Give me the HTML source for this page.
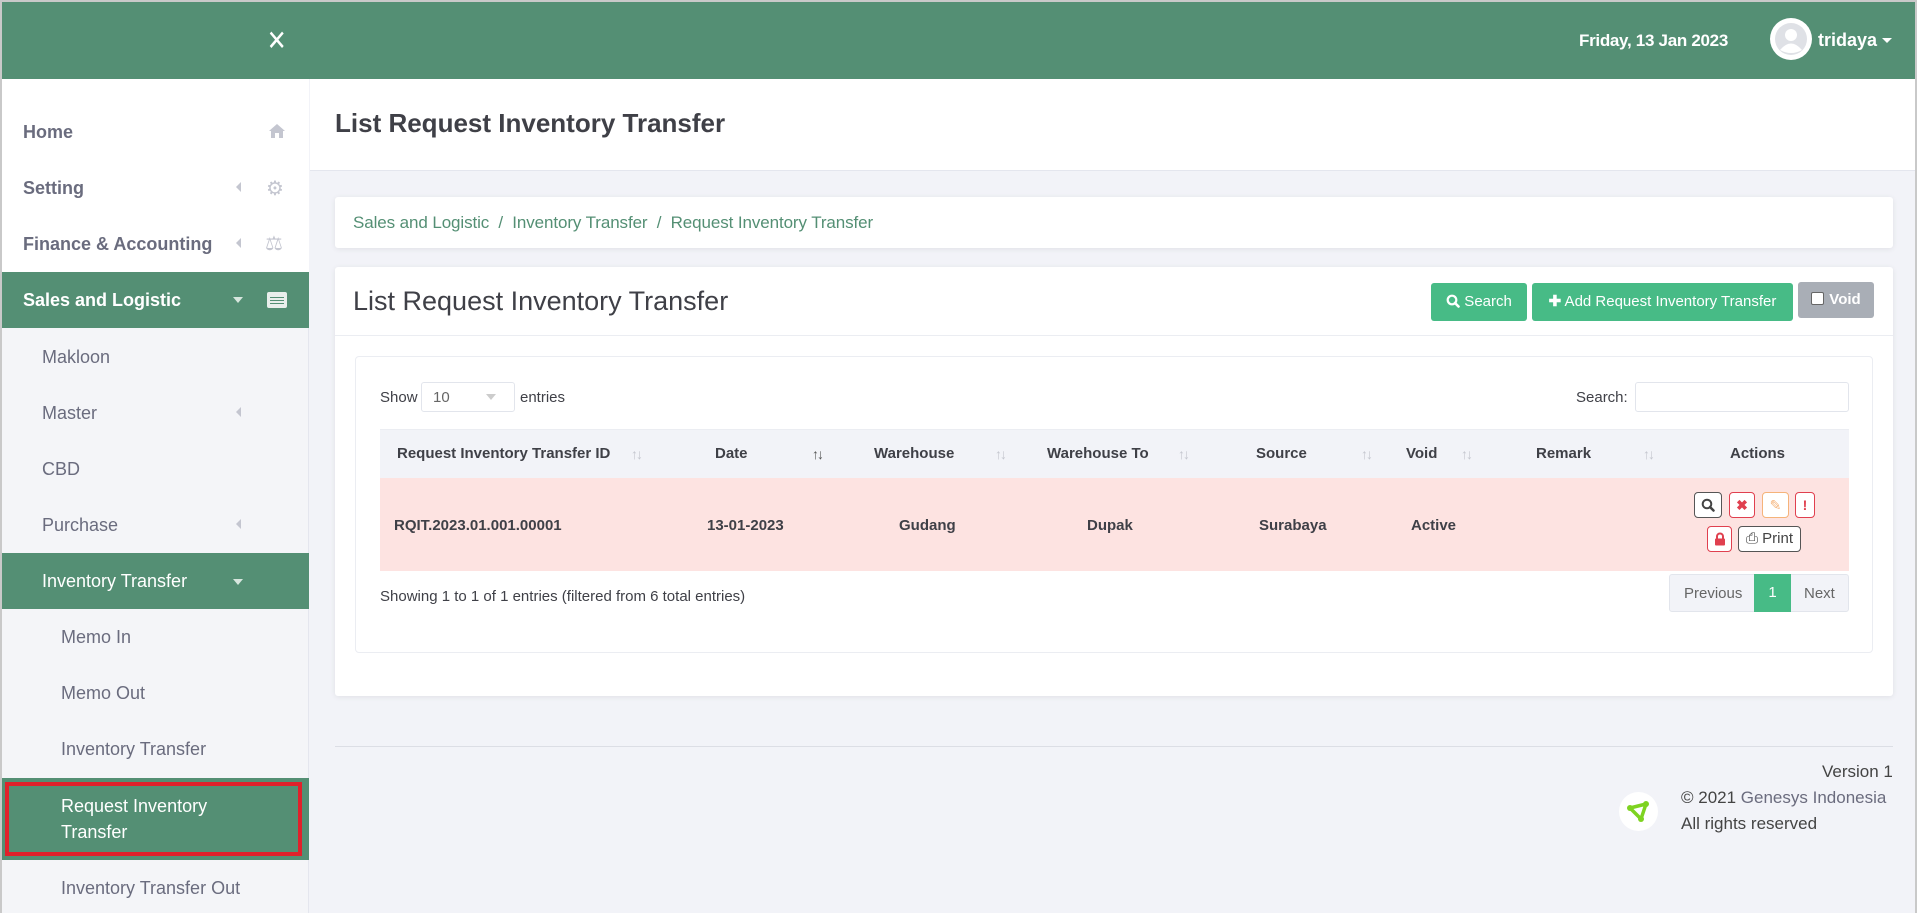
<!DOCTYPE html>
<html><head><meta charset="utf-8"><style>
*{box-sizing:border-box;margin:0;padding:0}
body{width:1917px;height:913px;overflow:hidden;font-family:"Liberation Sans",Arial,sans-serif;background:#f2f3f8;position:relative;color:#3f4047}
.frame{position:absolute;left:0;top:0;width:1917px;height:913px;border:2px solid #c9c9c9;border-bottom:none;pointer-events:none;z-index:10}
.a{position:absolute;white-space:nowrap}
.hdr{position:absolute;left:0;top:0;width:1917px;height:79px;background:#548f74}
.side{position:absolute;left:0;top:79px;width:309px;height:834px;background:#f4f5f8;border-right:1px solid #e4e6ee}
.sw{position:absolute;left:0;top:0;width:309px;height:193px;background:#fff}
.si{position:absolute;left:23px;font-size:18px;font-weight:bold;color:#6a6c7e}
.sub{position:absolute;font-size:18px;color:#6a6c7e}
.band{position:absolute;left:0;width:309px;background:#548f74}
.car{position:absolute;width:0;height:0;border-top:5px solid transparent;border-bottom:5px solid transparent;border-right:5px solid #c4c6d0}
.card{position:absolute;background:#fff;box-shadow:0 1px 6px rgba(0,0,0,.08);border-radius:3px}
.btn{position:absolute;border-radius:3px;color:#fff;font-size:15px;text-align:center}
.th{position:absolute;top:445px;font-size:15px;font-weight:bold;color:#3f4047}
.td{position:absolute;top:517px;font-size:15px;font-weight:bold;color:#3f4047}
.ar{position:absolute;top:446px;font-size:14px;color:#c5c7cf;letter-spacing:-2px}
.ib{position:absolute;height:26px;border:1px solid;border-radius:4px;background:#fff;font-size:14px;text-align:center;line-height:24px}
</style></head><body>
<div class="hdr"></div>
<div class="a" style="left:265px;top:24px;color:#fff;font-size:28px;font-weight:300;transform:scaleX(0.85)">✕</div>
<div class="a" style="left:1579px;top:31px;color:#fff;font-size:17px;font-weight:bold;letter-spacing:-0.3px">Friday, 13 Jan 2023</div>
<div class="a" style="left:1770px;top:18px;width:42px;height:42px;border-radius:50%;background:#fff"></div>
<svg class="a" style="left:1774px;top:22px" width="34" height="34" viewBox="0 0 34 34"><circle cx="17" cy="17" r="16" fill="#dfe1e6"/><circle cx="17" cy="13" r="6" fill="#fff"/><path d="M6 28 Q17 15 28 28 Q17 34 6 28Z" fill="#fff"/></svg>
<div class="a" style="left:1818px;top:30px;color:#fff;font-size:18px;font-weight:bold">tridaya</div>
<div class="a" style="left:1882px;top:38px;border-left:5px solid transparent;border-right:5px solid transparent;border-top:5px solid #fff"></div>

<div class="side">
<div class="sw"></div>
<div class="si" style="top:43px">Home</div>
<svg class="a" style="left:268px;top:44px" width="18" height="16" viewBox="0 0 18 16"><path d="M9 1 L1 8 H3 V15 H7 V10 H11 V15 H15 V8 H17 Z" fill="#c4c6d0"/></svg>
<div class="si" style="top:99px">Setting</div><div class="car" style="left:236px;top:103px"></div>
<div class="a" style="left:266px;top:97px;color:#c4c6d0;font-size:20px">⚙</div>
<div class="si" style="top:155px">Finance &amp; Accounting</div><div class="car" style="left:236px;top:159px"></div>
<div class="a" style="left:265px;top:152px;color:#c4c6d0;font-size:20px">⚖</div>
<div class="band" style="top:193px;height:56px"></div>
<div class="si" style="top:211px;color:#fff">Sales and Logistic</div>
<div class="a" style="left:233px;top:218px;border-left:5px solid transparent;border-right:5px solid transparent;border-top:6px solid #d7e6de"></div>
<div class="a" style="left:267px;top:213px;width:20px;height:16px;background:#e9efec;border-radius:2px"></div>
<div class="a" style="left:270px;top:218px;width:14px;height:1px;background:#548f74;box-shadow:0 3px 0 #548f74,0 6px 0 #548f74"></div>
<div class="sub" style="left:42px;top:268px">Makloon</div>
<div class="sub" style="left:42px;top:324px">Master</div><div class="car" style="left:236px;top:328px"></div>
<div class="sub" style="left:42px;top:380px">CBD</div>
<div class="sub" style="left:42px;top:436px">Purchase</div><div class="car" style="left:236px;top:440px"></div>
<div class="band" style="top:474px;height:56px"></div>
<div class="sub" style="left:42px;top:492px;color:#fff">Inventory Transfer</div>
<div class="a" style="left:233px;top:500px;border-left:5px solid transparent;border-right:5px solid transparent;border-top:6px solid #d7e6de"></div>
<div class="sub" style="left:61px;top:548px">Memo In</div>
<div class="sub" style="left:61px;top:604px">Memo Out</div>
<div class="sub" style="left:61px;top:660px">Inventory Transfer</div>
<div class="band" style="top:699px;height:82px"></div>
<div class="a" style="left:5px;top:703px;width:297px;height:74px;border:4px solid #e0212b"></div>
<div class="sub" style="left:61px;top:714px;color:#fff;line-height:26px;white-space:normal;width:200px">Request Inventory Transfer</div>
<div class="sub" style="left:61px;top:799px">Inventory Transfer Out</div>
</div>

<div class="a" style="left:310px;top:79px;width:1607px;height:92px;background:#fff;border-bottom:1px solid #e4e6ee"></div>
<div class="a" style="left:335px;top:108px;font-size:26px;font-weight:bold;color:#3f4047">List Request Inventory Transfer</div>

<div class="card" style="left:335px;top:197px;width:1558px;height:51px"></div>
<div class="a" style="left:353px;top:213px;font-size:17px;color:#548f74;letter-spacing:-0.1px">Sales and Logistic &nbsp;/&nbsp; Inventory Transfer &nbsp;/&nbsp; Request Inventory Transfer</div>

<div class="card" style="left:335px;top:267px;width:1558px;height:429px"></div>
<div class="a" style="left:335px;top:335px;width:1558px;height:1px;background:#ebedf2"></div>
<div class="a" style="left:353px;top:286px;font-size:27px;font-weight:300;color:#3f4047">List Request Inventory Transfer</div>
<div class="btn" style="left:1431px;top:283px;width:96px;height:38px;background:#47bb86;line-height:38px"><svg width="14" height="14" viewBox="0 0 14 14" style="vertical-align:-2px"><circle cx="6" cy="6" r="4.3" fill="none" stroke="#fff" stroke-width="2.2"/><path d="M9 9 L12.5 12.5" stroke="#fff" stroke-width="2.6" stroke-linecap="round"/></svg> Search</div>
<div class="btn" style="left:1532px;top:283px;width:261px;height:38px;background:#47bb86;line-height:38px"><b>✚</b> Add Request Inventory Transfer</div>
<div class="btn" style="left:1798px;top:282px;width:76px;height:36px;background:#a9aeb6;line-height:36px;font-weight:bold"><span style="display:inline-block;width:13px;height:13px;background:#fff;border:1px solid #666;border-radius:2px;vertical-align:-1px;margin-right:5px"></span>Void</div>

<div class="a" style="left:355px;top:356px;width:1518px;height:297px;background:#fff;border:1px solid #ebedf2;border-radius:4px"></div>
<div class="a" style="left:380px;top:389px;font-size:15px">Show</div>
<div class="a" style="left:421px;top:382px;width:94px;height:30px;border:1px solid #e2e5ec;border-radius:3px"></div>
<div class="a" style="left:433px;top:389px;font-size:15px;color:#666">10</div>
<div class="a" style="left:486px;top:394px;border-left:5px solid transparent;border-right:5px solid transparent;border-top:6px solid #ccc"></div>
<div class="a" style="left:520px;top:389px;font-size:15px">entries</div>
<div class="a" style="left:1576px;top:389px;font-size:15px">Search:</div>
<div class="a" style="left:1635px;top:382px;width:214px;height:30px;border:1px solid #e2e5ec;border-radius:3px"></div>

<div class="a" style="left:380px;top:429px;width:1469px;height:49px;background:#f2f3f8;border-top:1px solid #ebedf2"></div>
<div class="a" style="left:380px;top:478px;width:1469px;height:93px;background:#fde3e1"></div>
<div class="th" style="left:397px">Request Inventory Transfer ID</div><div class="ar" style="left:631px">↑↓</div>
<div class="th" style="left:715px">Date</div><div class="ar" style="left:812px;color:#555">↑↓</div>
<div class="th" style="left:874px">Warehouse</div><div class="ar" style="left:995px">↑↓</div>
<div class="th" style="left:1047px">Warehouse To</div><div class="ar" style="left:1178px">↑↓</div>
<div class="th" style="left:1256px">Source</div><div class="ar" style="left:1361px">↑↓</div>
<div class="th" style="left:1406px">Void</div><div class="ar" style="left:1461px">↑↓</div>
<div class="th" style="left:1536px">Remark</div><div class="ar" style="left:1643px">↑↓</div>
<div class="th" style="left:1730px">Actions</div>
<div class="td" style="left:394px">RQIT.2023.01.001.00001</div>
<div class="td" style="left:707px">13-01-2023</div>
<div class="td" style="left:899px">Gudang</div>
<div class="td" style="left:1087px">Dupak</div>
<div class="td" style="left:1259px">Surabaya</div>
<div class="td" style="left:1411px">Active</div>
<div class="ib" style="left:1694px;top:492px;width:28px;border-color:#555"><svg width="14" height="14" viewBox="0 0 14 14" style="vertical-align:-2px"><circle cx="6" cy="6" r="4.3" fill="none" stroke="#444" stroke-width="2"/><path d="M9 9 L12.5 12.5" stroke="#444" stroke-width="2.5" stroke-linecap="round"/></svg></div>
<div class="ib" style="left:1729px;top:492px;width:26px;border-color:#e0404f;color:#e0404f;font-weight:bold">✖</div>
<div class="ib" style="left:1762px;top:492px;width:27px;border-color:#f5b37a;color:#f5b37a">✎</div>
<div class="ib" style="left:1795px;top:492px;width:20px;border-color:#e0404f;color:#e0404f;font-weight:bold">!</div>
<div class="ib" style="left:1707px;top:526px;width:25px;border-color:#e0404f"><svg width="12" height="14" viewBox="0 0 12 14" style="vertical-align:-2px"><path d="M3 7 V4.5 A3 3 0 0 1 9 4.5 V7" fill="none" stroke="#e0404f" stroke-width="2"/><rect x="1" y="6.5" width="10" height="7" rx="1" fill="#e0404f"/></svg></div>
<div class="ib" style="left:1738px;top:526px;width:63px;border-color:#555;color:#444;font-size:15px">⎙ Print</div>

<div class="a" style="left:380px;top:588px;font-size:15px">Showing 1 to 1 of 1 entries (filtered from 6 total entries)</div>
<div class="a" style="left:1669px;top:574px;width:180px;height:38px;border:1px solid #e2e5ec;border-radius:3px;background:#f2f3f8"></div>
<div class="a" style="left:1684px;top:585px;font-size:15px;color:#666">Previous</div>
<div class="a" style="left:1754px;top:574px;width:37px;height:38px;background:#47bb86;color:#fff;font-size:15px;text-align:center;line-height:38px">1</div>
<div class="a" style="left:1804px;top:585px;font-size:15px;color:#666">Next</div>

<div class="a" style="left:335px;top:746px;width:1558px;height:1px;background:#dcdee5"></div>
<div class="a" style="left:1822px;top:762px;font-size:17px;color:#444">Version 1</div>
<div class="a" style="left:1681px;top:788px;font-size:17px;color:#444">© 2021 <span style="color:#6b6c7e">Genesys Indonesia</span></div>
<div class="a" style="left:1681px;top:814px;font-size:17px;color:#444">All rights reserved</div>
<div class="a" style="left:1619px;top:792px;width:39px;height:39px;border-radius:50%;background:#fff"></div>
<svg class="a" style="left:1623px;top:796px" width="31" height="31" viewBox="0 0 31 31"><path d="M7 12 L23 8 L18 23 Z" fill="none" stroke="#7ed321" stroke-width="3.5" stroke-linejoin="round"/><circle cx="7" cy="12" r="3" fill="#7ed321"/><circle cx="23" cy="8" r="3" fill="#7ed321"/><circle cx="18" cy="23" r="3" fill="#7ed321"/></svg>
<div class="frame"></div>
</body></html>
